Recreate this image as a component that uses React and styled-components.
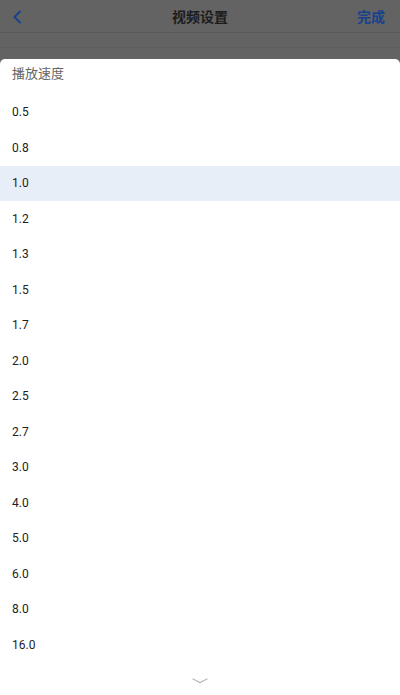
import React from 'react';
import styled, { createGlobalStyle } from 'styled-components';

const GlobalStyle = createGlobalStyle`
  html, body {
    margin: 0;
    padding: 0;
    background: #636363;
    font-family: Roboto, "Noto Sans", "Noto Sans CJK SC", sans-serif;
  }
`;

const Page = styled.div`
  width: 400px;
  height: 695px;
  display: flex;
  flex-direction: column;
  background: #636363;
  overflow: hidden;
`;

const NavBar = styled.div`
  height: 33px;
  display: grid;
  grid-template-columns: 60px 1fr 60px;
  align-items: center;
  border-bottom: 1px solid #5a5a5a;
  box-sizing: border-box;
`;

const BackButton = styled.div`
  display: flex;
  align-items: center;
  padding-left: 12px;
  padding-top: 2px;
`;

const Title = styled.div`
  text-align: center;
  font-size: 14px;
  font-weight: 700;
  color: #1c1c1c;
  font-family: "Noto Sans CJK SC", sans-serif;
`;

const Done = styled.div`
  text-align: right;
  padding-right: 15px;
  font-size: 14px;
  font-weight: 700;
  color: #17428c;
  font-family: "Noto Sans CJK SC", sans-serif;
`;

const Band = styled.div`
  height: 14px;
  border-bottom: 1px solid #5d5d5d;
`;

const Sheet = styled.div`
  margin-top: 11px;
  flex: 1;
  background: #fff;
  border-radius: 5px 5px 0 0;
  display: flex;
  flex-direction: column;
`;

const SheetHeader = styled.div`
  height: 35.5px;
  box-sizing: border-box;
  padding: 5px 0 0 12px;
  font-size: 13px;
  line-height: 18px;
  color: #666;
  font-family: "Noto Sans CJK SC", sans-serif;
`;

const Option = styled.div`
  height: 35.5px;
  display: flex;
  align-items: center;
  padding-left: 12px;
  font-size: 12px;
  color: #222;
  background: ${(p) => (p.$active ? '#e8eef8' : 'transparent')};
`;

const Footer = styled.div`
  display: flex;
  justify-content: center;
  padding-top: 15px;
`;

const speeds = ['0.5', '0.8', '1.0', '1.2', '1.3', '1.5', '1.7', '2.0', '2.5', '2.7', '3.0', '4.0', '5.0', '6.0', '8.0', '16.0'];

export default function App() {
  return (
    <Page>
      <GlobalStyle />
      <NavBar>
        <BackButton>
          <svg width="10" height="14" viewBox="0 0 10 14">
            <path d="M8 1.5 L2.5 7 L8 12.5" fill="none" stroke="#17428c" strokeWidth="2" strokeLinecap="round" strokeLinejoin="round" />
          </svg>
        </BackButton>
        <Title>视频设置</Title>
        <Done>完成</Done>
      </NavBar>
      <Band />
      <Sheet>
        <SheetHeader>播放速度</SheetHeader>
        {speeds.map((s) => (
          <Option key={s} $active={s === '1.0'}>{s}</Option>
        ))}
        <Footer>
          <svg width="16" height="6" viewBox="0 0 16 6">
            <path d="M1 1 L8 4.5 L15 1" fill="none" stroke="#b5b5b5" strokeWidth="1.2" strokeLinecap="round" />
          </svg>
        </Footer>
      </Sheet>
    </Page>
  );
}
